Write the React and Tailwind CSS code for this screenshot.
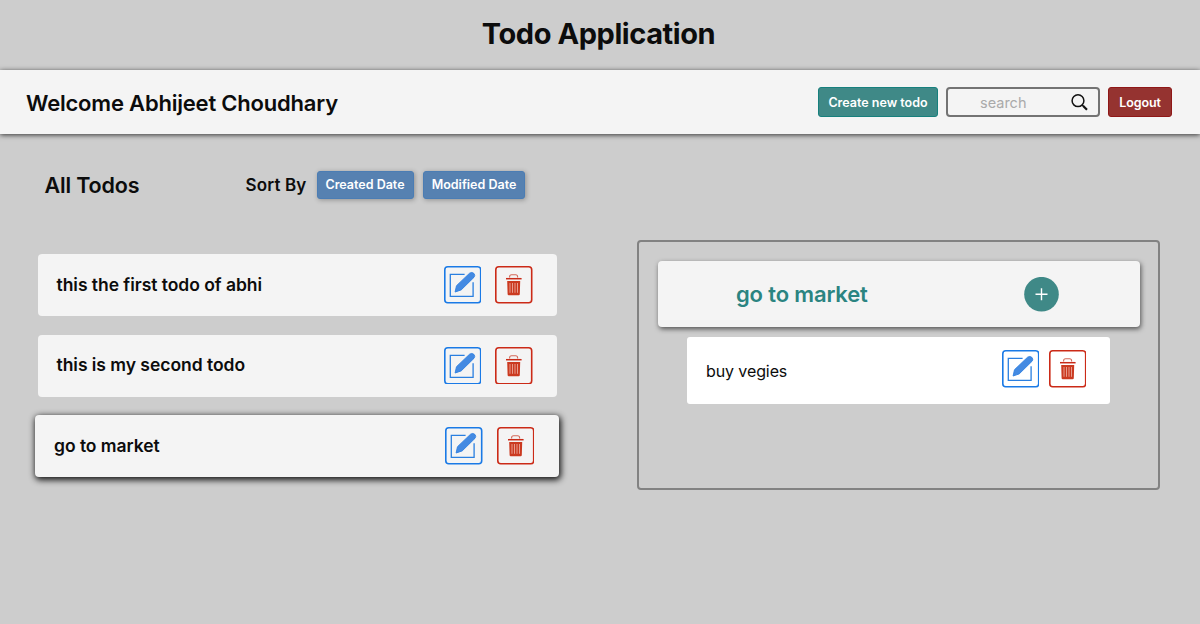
import React from 'react';

function EditButton() {
  return (
    <button aria-label="Edit" className="h-[37.5px] w-[37.5px] shrink-0">
      <svg viewBox="0 0 37.5 37.5" className="block h-full w-full" fill="none">
        <rect x="0.8" y="0.8" width="35.9" height="35.9" rx="3" stroke="#1a7ae6" strokeWidth="1.6" />
        <path d="M20.6 8.300H6.300v22h22.800V16.200" stroke="#2a7fe0" strokeWidth="1.300" />
        <path d="M11.100 26l1.400-6.300L25.600 7.200q2.200-1.500 4.200.1 1.800 2 .2 4L17.200 23.900z" fill="#448ae2" stroke="#2f7fe0" strokeWidth="0.900" strokeLinejoin="round" />
      </svg>
    </button>
  );
}

function DeleteButton() {
  return (
    <button aria-label="Delete" className="h-[37.5px] w-[37.5px] shrink-0">
      <svg viewBox="0 0 37.5 37.5" className="block h-full w-full" fill="none">
        <rect x="0.8" y="0.8" width="35.9" height="35.9" rx="3" stroke="#cb2a17" strokeWidth="1.600" />
        <path d="M14.600 11.600v-.900q0-2 2-2h4q2 0 2 2v.900" stroke="#d46a5a" strokeWidth="1.100" />
        <path d="M11 12.700h15.600" stroke="#c92a17" strokeWidth="1.500" />
        <path d="M12.200 15h13l-.4 13q0 1.200-1.200 1.200h-9.800q-1.200 0-1.200-1.200z" fill="#cb3a20" />
        <path d="M15 17v9.800M17.500 17v9.800M20 17v9.800M22.500 17v9.800" stroke="#efb5a9" strokeWidth="0.800" />
      </svg>
    </button>
  );
}

function TodoCard({ title, active }) {
  return (
    <li
      className={
        active
          ? 'flex h-[62px] items-center rounded-[4px] bg-[#f4f4f4] pl-[19px] pr-[25px] -mx-[2.5px] shadow-[1px_2px_6px_1px_rgba(0,0,0,0.9)]'
          : 'flex h-[62px] items-center rounded-[4px] bg-[#f4f4f4] pl-[19px] pr-6'
      }
    >
      <span className="flex-1 text-[17.5px] font-semibold tracking-[-0.04px]">{title}</span>
      <div className="flex gap-[14px]">
        <EditButton />
        <DeleteButton />
      </div>
    </li>
  );
}

function SortButton({ children, className }) {
  return (
    <button className={`h-7 whitespace-nowrap rounded-[3px] border border-[#4b7db4] bg-[#5681b1] text-[12.5px] font-semibold text-white shadow-[1px_1px_5px_rgba(0,0,0,0.3)] ${className}`}>
      {children}
    </button>
  );
}

export default function App() {
  return (
    <div className="h-[624px] overflow-hidden bg-[#cdcdcd] font-['Inter',sans-serif] text-[#0c0c0c]">
      <header className="flex h-[70px] items-center justify-center pb-[3px] pr-[3px]">
        <h1 className="whitespace-nowrap text-[29px] font-bold tracking-[-0.42px]">Todo Application</h1>
      </header>

      <nav className="flex h-16 items-center bg-[#f4f4f4] pl-[26px] pr-7 shadow-[0_1px_5px_rgba(0,0,0,0.75)]">
        <h2 className="flex-1 whitespace-nowrap pt-0.5 text-[22px] font-semibold tracking-[-0.2px]">Welcome Abhijeet Choudhary</h2>
        <button className="h-[30px] w-[120px] whitespace-nowrap rounded-[3px] border border-[#16807d] bg-[#3f8987] pt-0.5 text-[12.500px] font-semibold text-white">
          Create new todo
        </button>
        <div className="ml-2 flex h-[30px] w-[154px] items-center rounded-[4px] border-2 border-[#737373] pl-8 pr-[10px]">
          <input
            placeholder="search"
            className="w-0 flex-1 bg-transparent pt-0.5 text-[14.500px] outline-none placeholder:text-[#aaaaaa]"
          />
          <svg viewBox="0 0 18 18" className="h-[18px] w-[18px]" fill="none" stroke="#111111">
            <circle cx="8" cy="7.700" r="5.900" strokeWidth="1.500" />
            <path d="M12.200 12l1.600 1.600" strokeWidth="1.500" />
            <path d="M13.200 13l3.800 3.800" strokeWidth="2.200" />
          </svg>
        </div>
        <button className="ml-2 h-[30px] w-16 rounded-[3px] border border-[#8f1717] bg-[#953330] pt-0.5 text-[12.500px] font-semibold tracking-[-0.1px] text-white">
          Logout
        </button>
      </nav>

      <main className="flex">
        <section className="ml-[37.5px] w-[519px]">
          <div className="flex h-[102px] items-center pl-[7px]">
            <h3 className="w-[201px] whitespace-nowrap text-[21.500px] font-semibold tracking-[-0.15px]">All Todos</h3>
            <span className="w-[71px] whitespace-nowrap pt-0.5 text-[17px] font-semibold tracking-[0.15px]">Sort By</span>
            <SortButton className="w-[97px]">Created Date</SortButton>
            <SortButton className="ml-[9.5px] w-[102px]">Modified Date</SortButton>
          </div>
          <ul className="mt-[18px] flex flex-col gap-[18.500px]">
            <TodoCard title="this the first todo of abhi" />
            <TodoCard title="this is my second todo" />
            <TodoCard title="go to market" active />
          </ul>
        </section>

        <section className="ml-[80.5px] mt-[106px] h-[250px] w-[523px] rounded-[4px] border-2 border-[#828282] px-[18.5px] pt-[19px]">
          <div className="flex h-[66px] items-center rounded-[4px] bg-[#f4f4f4] shadow-[1px_2px_5px_rgba(0,0,0,0.6)]">
            <h3 className="w-[366.5px] pl-[78.5px] text-[22px] font-semibold tracking-[-0.15px] text-[#2b8481]">go to market</h3>
            <button aria-label="Add" className="h-[35px] w-[35px]">
              <svg viewBox="0 0 35 35" className="block h-full w-full">
                <circle cx="17.500" cy="17.200" r="17.300" fill="#3f8987" />
                <path d="M11.500 17.200h12M17.500 11.200v12" stroke="#ffffff" strokeWidth="1.400" />
              </svg>
            </button>
          </div>
          <div className="ml-[29.5px] mt-[10px] flex h-[67px] w-[423px] items-center rounded-[3px] bg-white pl-[19px] pr-6">
            <span className="flex-1 text-[16px] tracking-[-0.1px]">buy vegies</span>
            <div className="flex gap-[9.500px] pb-[3px]">
              <EditButton />
              <DeleteButton />
            </div>
          </div>
        </section>
      </main>
    </div>
  );
}
